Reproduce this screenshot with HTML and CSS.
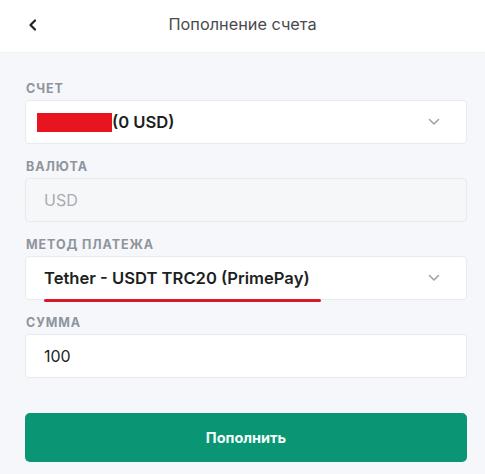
FILE: index.html
```html
<!DOCTYPE html>
<html lang="ru">
<head>
<meta charset="utf-8">
<link rel="stylesheet" href="styles.css">
</head>
<body>
<header class="topbar">
  <svg class="back" width="10" height="12" viewBox="0 0 10 12"><polyline points="7,1.5 2.5,6 7,10.5" fill="none" stroke="#222" stroke-width="2.2" stroke-linecap="round" stroke-linejoin="round"/></svg>
  <div class="title">Пополнение счета</div>
</header>
<main class="form">
  <div class="field">
    <div class="label">Счет</div>
    <div class="box select"><span class="value strong"><span class="redact"></span>(0 USD)</span>
      <svg class="chev" width="12" height="8" viewBox="0 0 12 8"><polyline points="1.5,1.5 6,6 10.5,1.5" fill="none" stroke="#9ea2aa" stroke-width="1.6" stroke-linecap="round" stroke-linejoin="round"/></svg>
    </div>
  </div>
  <div class="field">
    <div class="label">Валюта</div>
    <div class="box disabled"><span class="value">USD</span></div>
  </div>
  <div class="field">
    <div class="label">Метод платежа</div>
    <div class="box select"><span class="value strong">Tether - USDT TRC20 (PrimePay)</span>
      <svg class="chev" width="12" height="8" viewBox="0 0 12 8"><polyline points="1.5,1.5 6,6 10.5,1.5" fill="none" stroke="#9ea2aa" stroke-width="1.6" stroke-linecap="round" stroke-linejoin="round"/></svg>
      <span class="underline"></span>
    </div>
  </div>
  <div class="field">
    <div class="label">Сумма</div>
    <div class="box"><span class="value plain">100</span></div>
  </div>
  <button class="submit">Пополнить</button>
</main>
</body>
</html>
```
FILE: styles.css
```css
* { box-sizing: border-box; }
html, body { margin: 0; padding: 0; }
body {
  background: #f6f7fa;
  font-family: Inter, "Noto Sans", sans-serif;
  width: 485px;
  height: 474px;
  overflow: hidden;
}
.topbar {
  height: 53px;
  background: #fff;
  border-bottom: 1px solid #f0f1f3;
  display: flex;
  align-items: center;
  position: relative;
  padding-bottom: 2px;
}
.back { margin-left: 28px; }
.title {
  position: absolute;
  left: 0; right: 0;
  top: 15px;
  text-align: center;
  font-size: 16.3px;
  color: #484a4e;
  line-height: 18px;
}
.form {
  padding: 29px 18px 0 25px;
  display: flex;
  flex-direction: column;
}
.field { display: flex; flex-direction: column; }
.field + .field { margin-top: 16px; }
.label {
  font-size: 12.5px;
  font-weight: 700;
  line-height: 14px;
  letter-spacing: 0.9px;
  text-transform: uppercase;
  color: #8f949d;
  margin-bottom: 4px;
  padding-left: 1px;
}
.box {
  height: 44px;
  background: #fff;
  border: 1px solid #e9eaee;
  border-radius: 4px;
  display: flex;
  align-items: center;
  padding: 0 26px 0 18px;
  position: relative;
}
.value {
  flex: 1;
  font-size: 16px;
  color: #a8acb3;
  display: flex;
  align-items: center;
}
.value.strong { color: #1d1f23; font-weight: 600; font-size: 16.6px; }
.value.plain { color: #1d1f23; }
.disabled { background: #f6f7f9; }
.redact {
  display: inline-block;
  width: 75px;
  height: 19px;
  background: #e8141f;
  margin-left: -7px;
}
.chev { flex: none; }
.underline {
  position: absolute;
  left: 18px;
  bottom: -3px;
  width: 277px;
  height: 3px;
  border-radius: 2px;
  background: #d9192b;
}
.submit {
  margin-top: 35px;
  height: 49px;
  border: none;
  border-radius: 5px;
  background: #0a9574;
  color: #f4fffb;
  font-family: Inter, "Noto Sans", sans-serif;
  font-size: 14.5px;
  font-weight: 700;
}
```
